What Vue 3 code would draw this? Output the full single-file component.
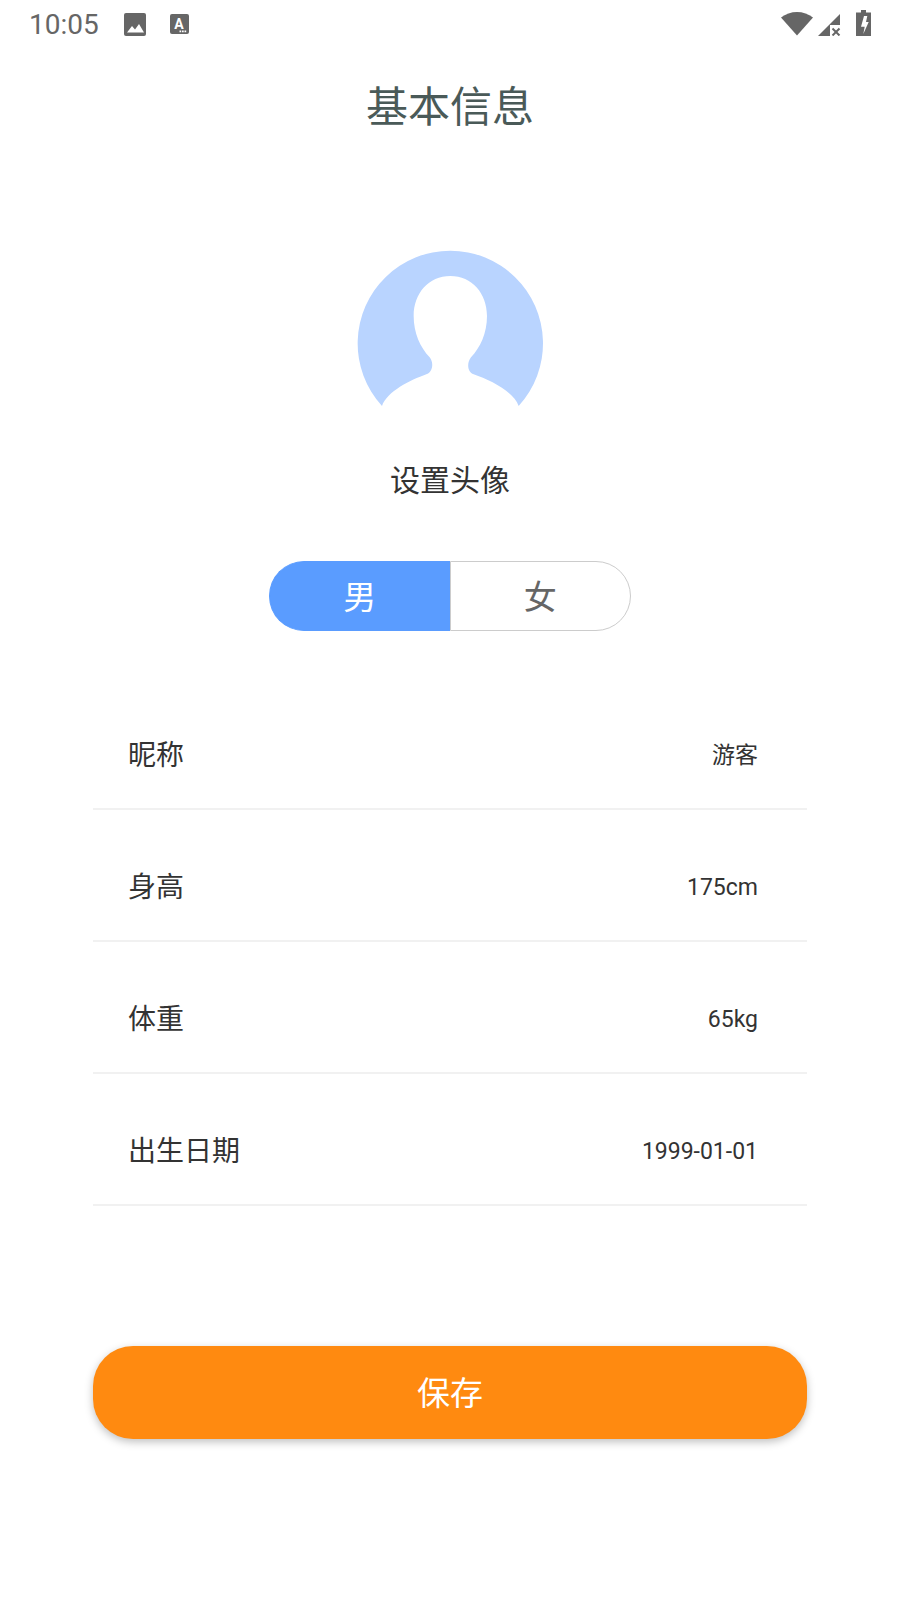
<script setup>
import { ref } from 'vue'

const gender = ref('male')

const rows = ref([
  { label: '昵称', value: '游客' },
  { label: '身高', value: '175cm', num: true },
  { label: '体重', value: '65kg', num: true },
  { label: '出生日期', value: '1999-01-01', num: true }
])
</script>

<template>
  <div class="page">
    <!-- status bar -->
    <div class="status-bar">
      <span class="time">10:05</span>
      <svg class="ic-image" viewBox="0 0 22 23">
        <rect width="22" height="23" rx="2" fill="#666" />
        <path d="M3 19.500 L8 13 L11 16.500 L15 11 L20 19.500 Z" fill="#fff" />
      </svg>
      <svg class="ic-font" viewBox="0 0 19 20">
        <rect width="19" height="20" rx="2" fill="#666" />
        <text x="9" y="15" text-anchor="middle" font-size="14" font-weight="700" font-family="Roboto, sans-serif" fill="#fff">A</text>
        <path d="M9.500 16.500h1.700v1.700H9.500zM12 16.500h1.700v1.700H12zM14.500 16.500h1.700v1.700h-1.700z" fill="#fff" />
      </svg>
      <span class="spacer"></span>
      <div class="status-right">
        <svg class="ic-wifi" viewBox="0 0 32 26">
          <path d="M0 7.500 C9 0 23 0 32 7.500 L16 25.500 Z" fill="#666" />
        </svg>
        <svg class="ic-signal" viewBox="0 0 25 22">
          <path d="M0 22 L22 0 V11 H12 V22 Z" fill="#666" />
          <path d="M14.500 14.500 L21.500 21.500 M21.500 14.500 L14.500 21.500" stroke="#666" stroke-width="2" />
        </svg>
        <svg class="ic-battery" viewBox="0 0 15 26">
          <path d="M5 0 H10 V2.500 H15 V26 H0 V2.500 H5 Z" fill="#666" />
          <path d="M8 6 H11.300 L10 12 H12.700 L7.300 24 L8.700 16.700 H5 Z" fill="#fff" />
        </svg>
      </div>
    </div>

    <h1 class="title">基本信息</h1>

    <div class="avatar-block">
      <svg class="avatar" viewBox="50 30 560 475">
        <path
          d="M125 498 A278 278 0 1 1 535 498 C520 455 450 420 400 403 C382 397 378 370 392 352 C420 322 440 280 440 228 C440 160 395 108 330 108 C265 108 220 160 220 228 C220 280 240 322 268 352 C282 370 276 397 258 403 C210 420 140 455 125 498 Z"
          fill="#b9d4ff"
        />
      </svg>
      <div class="avatar-text">设置头像</div>
    </div>

    <div class="toggle">
      <button type="button" class="toggle-item left" :class="{ active: gender === 'male' }" @click="gender = 'male'">男</button>
      <button type="button" class="toggle-item right" :class="{ active: gender === 'female' }" @click="gender = 'female'">女</button>
    </div>

    <div class="form">
      <div v-for="row in rows" :key="row.label" class="row">
        <span class="row-label">{{ row.label }}</span>
        <span class="row-value" :class="{ num: row.num }">{{ row.value }}</span>
      </div>
    </div>

    <button type="button" class="save-btn">保存</button>
  </div>
</template>

<style>
html,
body {
  margin: 0;
  background: #fff;
}
</style>

<style scoped>
.page {
  width: 900px;
  height: 1600px;
  background: #fff;
  font-family: Roboto, "Noto Sans CJK SC", sans-serif;
  display: flex;
  flex-direction: column;
  overflow: hidden;
}

.status-bar {
  height: 50px;
  box-sizing: border-box;
  flex-shrink: 0;
  display: flex;
  align-items: center;
  padding: 0 29px 2px 29px;
}

.time {
  font-size: 28px;
  color: #666;
  margin-right: 25px;
}

.ic-image {
  width: 22px;
  height: 23px;
  margin-right: 24px;
}

.ic-font {
  width: 19px;
  height: 20px;
}

.spacer {
  flex: 1;
}

.status-right {
  display: flex;
  align-items: flex-end;
  margin-top: -2px;
}

.ic-wifi {
  width: 32px;
  height: 26px;
  margin-right: 5px;
}

.ic-signal {
  width: 25px;
  height: 22px;
  margin-right: 13px;
}

.ic-battery {
  width: 15px;
  height: 26px;
}

.title {
  margin: 30px 0 0;
  font-size: 42px;
  font-weight: 400;
  line-height: 56px;
  text-align: center;
  color: #4a5a58;
}

.avatar-block {
  margin-top: 114px;
  display: flex;
  flex-direction: column;
  align-items: center;
}

.avatar {
  width: 186.670px;
  height: 158.330px;
  display: block;
}

.avatar-text {
  margin-top: 51px;
  font-size: 30px;
  line-height: 44px;
  color: #333;
}

.toggle {
  margin: 58px auto 0;
  display: flex;
  width: 362px;
  height: 70px;
}

.toggle-item {
  flex: 1;
  padding: 0 0 3px;
  background: #fff;
  border: 1px solid #ccc;
  font-family: inherit;
  font-size: 33px;
  color: #666;
  cursor: pointer;
}

.toggle-item.left {
  border-radius: 35px 0 0 35px;
  border-right: none;
}

.toggle-item.right {
  border-radius: 0 35px 35px 0;
  border-left: 1px solid #ccc;
}

.toggle-item.active {
  background: #5a9cff;
  border-color: #5a9cff;
  color: #fff;
}

.form {
  margin: 47px 93px 0;
}

.row {
  height: 132px;
  box-sizing: border-box;
  padding: 20px 49px 0 35px;
  display: flex;
  align-items: center;
  justify-content: space-between;
  border-bottom: 2px solid #f1f1f1;
}

.row-label {
  font-size: 28px;
  color: #333;
}

.row-value {
  font-size: 23px;
  color: #333;
}

.row-value.num {
  padding-top: 4px;
}

.save-btn {
  margin: 140px 93px 0;
  height: 93px;
  flex-shrink: 0;
  border: none;
  border-radius: 40px;
  padding: 0 0 4px;
  background: #ff8a10;
  color: #fff;
  font-family: inherit;
  font-size: 33px;
  box-shadow: 0 3px 8px rgba(0, 0, 0, 0.25);
}
</style>
